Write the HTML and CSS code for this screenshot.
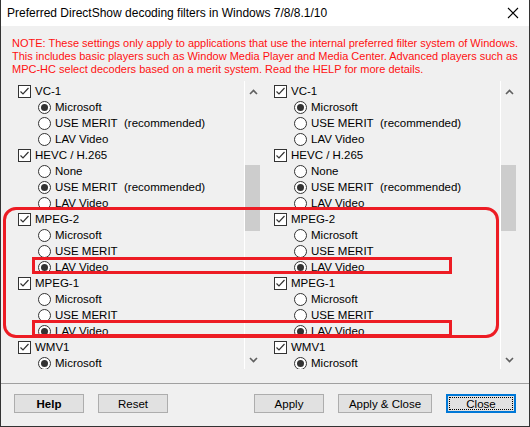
FILE: index.html
```html
<!DOCTYPE html>
<html>
<head>
<meta charset="utf-8">
<link rel="stylesheet" href="styles.css">
</head>
<body>
<div class="window">
  <div class="titlebar">
    <span class="title">Preferred DirectShow decoding filters in Windows 7/8/8.1/10</span>
    <svg class="close-x" width="12" height="12" viewBox="0 0 12 12"><path d="M1 1 L11 11 M11 1 L1 11" stroke="#000" stroke-width="1.1" fill="none"/></svg>
  </div>
  <div class="note">NOTE: These settings only apply to applications that use the internal preferred filter system of Windows.<br>This includes basic players such as Window Media Player and Media Center. Advanced players such as<br>MPC-HC select decoders based on a merit system. Read the HELP for more details.</div>
  <div class="panels">
    <div class="panel">
      <div class="list">
        <div class="row"><span class="cb"><svg width="11" height="11" viewBox="0 0 11 11"><path d="M1.5 5.5 L4 8 L9.5 2" stroke="#333" stroke-width="1.2" fill="none"/></svg></span>VC-1</div>
        <div class="row sub"><span class="rb on"></span>Microsoft</div>
        <div class="row sub"><span class="rb"></span>USE MERIT&nbsp;&nbsp;(recommended)</div>
        <div class="row sub"><span class="rb"></span>LAV Video</div>
        <div class="row"><span class="cb"><svg width="11" height="11" viewBox="0 0 11 11"><path d="M1.5 5.5 L4 8 L9.5 2" stroke="#333" stroke-width="1.2" fill="none"/></svg></span>HEVC / H.265</div>
        <div class="row sub"><span class="rb"></span>None</div>
        <div class="row sub"><span class="rb on"></span>USE MERIT&nbsp;&nbsp;(recommended)</div>
        <div class="row sub"><span class="rb"></span>LAV Video</div>
        <div class="row"><span class="cb"><svg width="11" height="11" viewBox="0 0 11 11"><path d="M1.5 5.5 L4 8 L9.5 2" stroke="#333" stroke-width="1.2" fill="none"/></svg></span>MPEG-2</div>
        <div class="row sub"><span class="rb"></span>Microsoft</div>
        <div class="row sub"><span class="rb"></span>USE MERIT</div>
        <div class="row sub"><span class="rb on"></span>LAV Video</div>
        <div class="row"><span class="cb"><svg width="11" height="11" viewBox="0 0 11 11"><path d="M1.5 5.5 L4 8 L9.5 2" stroke="#333" stroke-width="1.2" fill="none"/></svg></span>MPEG-1</div>
        <div class="row sub"><span class="rb"></span>Microsoft</div>
        <div class="row sub"><span class="rb"></span>USE MERIT</div>
        <div class="row sub"><span class="rb on"></span>LAV Video</div>
        <div class="row"><span class="cb"><svg width="11" height="11" viewBox="0 0 11 11"><path d="M1.5 5.5 L4 8 L9.5 2" stroke="#333" stroke-width="1.2" fill="none"/></svg></span>WMV1</div>
        <div class="row sub"><span class="rb on"></span>Microsoft</div>
      </div>
      <div class="scrollbar">
        <svg class="arrow" width="9" height="6" viewBox="0 0 9 6"><path d="M1 5 L4.5 1.5 L8 5" stroke="#606060" stroke-width="1.6" fill="none"/></svg>
        <div class="track"><div class="thumb"></div></div>
        <svg class="arrow" width="9" height="6" viewBox="0 0 9 6"><path d="M1 1 L4.5 4.5 L8 1" stroke="#606060" stroke-width="1.6" fill="none"/></svg>
      </div>
    </div>
    <div class="panel">
      <div class="list">
        <div class="row"><span class="cb"><svg width="11" height="11" viewBox="0 0 11 11"><path d="M1.5 5.5 L4 8 L9.5 2" stroke="#333" stroke-width="1.2" fill="none"/></svg></span>VC-1</div>
        <div class="row sub"><span class="rb on"></span>Microsoft</div>
        <div class="row sub"><span class="rb"></span>USE MERIT&nbsp;&nbsp;(recommended)</div>
        <div class="row sub"><span class="rb"></span>LAV Video</div>
        <div class="row"><span class="cb"><svg width="11" height="11" viewBox="0 0 11 11"><path d="M1.5 5.5 L4 8 L9.5 2" stroke="#333" stroke-width="1.2" fill="none"/></svg></span>HEVC / H.265</div>
        <div class="row sub"><span class="rb"></span>None</div>
        <div class="row sub"><span class="rb on"></span>USE MERIT&nbsp;&nbsp;(recommended)</div>
        <div class="row sub"><span class="rb"></span>LAV Video</div>
        <div class="row"><span class="cb"><svg width="11" height="11" viewBox="0 0 11 11"><path d="M1.5 5.5 L4 8 L9.5 2" stroke="#333" stroke-width="1.2" fill="none"/></svg></span>MPEG-2</div>
        <div class="row sub"><span class="rb"></span>Microsoft</div>
        <div class="row sub"><span class="rb"></span>USE MERIT</div>
        <div class="row sub"><span class="rb on"></span>LAV Video</div>
        <div class="row"><span class="cb"><svg width="11" height="11" viewBox="0 0 11 11"><path d="M1.5 5.5 L4 8 L9.5 2" stroke="#333" stroke-width="1.2" fill="none"/></svg></span>MPEG-1</div>
        <div class="row sub"><span class="rb"></span>Microsoft</div>
        <div class="row sub"><span class="rb"></span>USE MERIT</div>
        <div class="row sub"><span class="rb on"></span>LAV Video</div>
        <div class="row"><span class="cb"><svg width="11" height="11" viewBox="0 0 11 11"><path d="M1.5 5.5 L4 8 L9.5 2" stroke="#333" stroke-width="1.2" fill="none"/></svg></span>WMV1</div>
        <div class="row sub"><span class="rb on"></span>Microsoft</div>
      </div>
      <div class="scrollbar">
        <svg class="arrow" width="9" height="6" viewBox="0 0 9 6"><path d="M1 5 L4.5 1.5 L8 5" stroke="#606060" stroke-width="1.6" fill="none"/></svg>
        <div class="track"><div class="thumb"></div></div>
        <svg class="arrow" width="9" height="6" viewBox="0 0 9 6"><path d="M1 1 L4.5 4.5 L8 1" stroke="#606060" stroke-width="1.6" fill="none"/></svg>
      </div>
    </div>
  </div>
  <div class="separator"></div>
  <div class="buttons">
    <div class="btn bold btn-help">Help</div>
    <div class="btn btn-reset">Reset</div>
    <div class="spacer"></div>
    <div class="btn btn-apply">Apply</div>
    <div class="btn btn-applyclose">Apply &amp; Close</div>
    <div class="btn btn-close"><span class="focus">Close</span></div>
  </div>
  <div class="mark mark-group"></div>
  <div class="mark mark-row1"></div>
  <div class="mark mark-row2"></div>
</div>
</body>
</html>
```

FILE: styles.css
```css
* { box-sizing: border-box; }
html, body { margin: 0; padding: 0; }
body {
  font-family: "Liberation Sans", Arial, sans-serif;
  font-size: 11px;
  color: #000;
  background: #fff;
}
.window {
  position: relative;
  width: 530px;
  height: 427px;
  background: #f0f0f0;
  border-left: 1px solid #333;
  border-right: 1px solid #333;
  border-bottom: 1px solid #333;
  overflow: hidden;
}
.titlebar {
  height: 26px;
  background: #fff;
  display: flex;
  align-items: center;
  justify-content: space-between;
  padding: 0 10px 0 6px;
}
.title {
  font-size: 12px;
  color: #000;
  padding-bottom: 1px;
}
.close-x { display: block; }
.note {
  color: #ff1010;
  line-height: 13px;
  padding: 11px 0 0 11px;
  height: 55px;
  white-space: nowrap;
}
.panels {
  display: flex;
  gap: 6px;
  padding-left: 10px;
  height: 288px;
}
.panel {
  width: 250px;
  height: 288px;
  display: flex;
  overflow: hidden;
}
.list {
  flex: 1;
  padding: 2px 0 0 7px;
  overflow: hidden;
  font-size: 11.5px;
}
.row {
  height: 16px;
  display: flex;
  align-items: center;
  white-space: nowrap;
}
.row.sub { padding-left: 20px; }
.cb {
  width: 13px;
  height: 13px;
  border: 1px solid #333;
  background: #fff;
  margin-right: 4px;
  display: flex;
  align-items: center;
  justify-content: center;
  flex: none;
}
.cb svg { display: block; }
.rb {
  width: 13px;
  height: 13px;
  border: 1px solid #333;
  border-radius: 50%;
  background: #fff;
  margin-right: 4px;
  flex: none;
  display: flex;
  align-items: center;
  justify-content: center;
}
.rb.on::after {
  content: "";
  width: 7px;
  height: 7px;
  border-radius: 50%;
  background: #333;
}
.scrollbar {
  width: 17px;
  flex: none;
  border-left: 1px solid #fff;
  display: flex;
  flex-direction: column;
  align-items: center;
  padding: 8px 0 6px;
}
.arrow { display: block; flex: none; }
.track {
  flex: 1;
  width: 100%;
  position: relative;
  padding-top: 70px;
}
.thumb {
  width: 15px;
  height: 66px;
  background: #cdcdcd;
  margin-left: 0;
}
.separator {
  height: 1px;
  background: #a0a0a0;
  margin-top: 14px;
}
.buttons {
  display: flex;
  align-items: center;
  padding: 10px 13px 0 13px;
  gap: 14px;
}
.spacer { flex: 1; }
.btn {
  height: 19px;
  border: 1px solid #adadad;
  background: #e1e1e1;
  display: flex;
  align-items: center;
  justify-content: center;
  font-size: 11.5px;
  color: #000;
}
.btn.bold { font-weight: bold; }
.btn-help, .btn-reset, .btn-apply { width: 70px; }
.btn-applyclose { width: 94px; }
.btn-close {
  width: 70px;
  border: 2px solid #0078d7;
  padding: 1px;
}
.btn-close .focus {
  width: 100%;
  height: 100%;
  border: 1px dotted #000;
  display: flex;
  align-items: center;
  justify-content: center;
}
.mark {
  position: absolute;
  border: 3px solid #ed1c24;
}
.mark-group {
  left: 2px;
  top: 207px;
  width: 496px;
  height: 131px;
  border-radius: 13px;
}
.mark-row1 {
  left: 31px;
  top: 257px;
  width: 420px;
  height: 17px;
}
.mark-row2 {
  left: 31px;
  top: 320px;
  width: 420px;
  height: 17px;
}
```
